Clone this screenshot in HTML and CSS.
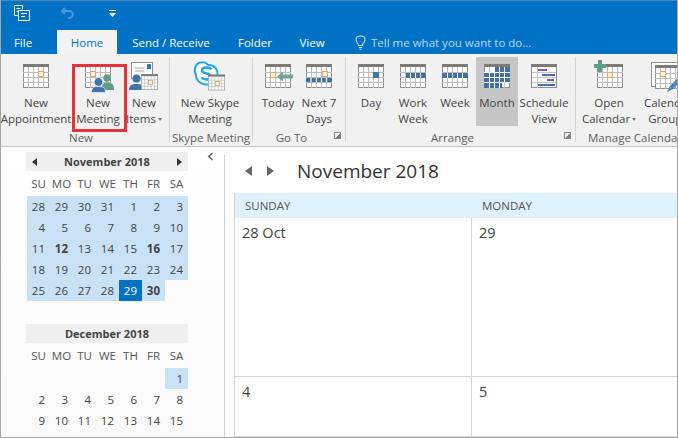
FILE: index.html
```html
<!DOCTYPE html>
<html lang="en">
<head>
<meta charset="utf-8">
<title>Calendar - Outlook</title>
<link rel="stylesheet" href="styles.css">
</head>
<body>
<svg class="defs" width="0" height="0">
  <defs>
    <symbol id="cal" viewBox="0 0 26 24">
      <rect x="0.5" y="0.5" width="25" height="23" fill="#fff" stroke="#8f8f8f"/>
      <rect x="0" y="0" width="26" height="3" fill="#7d7a78"/>
      <path d="M5.500 3V24M10.500 3V24M15.500 3V24M20.500 3V24M0 8.500H26M0 13.500H26M0 18.500H26" stroke="#bcbcbc" fill="none"/>
    </symbol>
    <symbol id="orange" viewBox="0 0 6 6">
      <rect x="0.5" y="0.5" width="5" height="5" fill="#fdf3e6" stroke="#e2a568"/>
    </symbol>
  </defs>
</svg>
<div class="app">
  <header class="titlebar">
    <div class="qat">
      <svg class="qat-outlook" width="18" height="18" viewBox="0 0 18 18" fill="none" stroke="#fff">
        <path d="M1.500 1.500H9.500V5.500M1.500 1.500V11.500H4.500M3.500 4.500H7.500M3.500 7.500H5M5.500 6.500H16.500V16.500H5.500ZM8 9.500H14M8 12.500H12"/>
      </svg>
      <svg class="qat-undo" width="14" height="12" viewBox="0 0 14 12" fill="none" stroke="#4f97d6" stroke-width="2">
        <path d="M5 1L2 4L5 7M2 4H9C14 4 14 11 8 11"/>
      </svg>
      <svg class="qat-more" width="7" height="7" viewBox="0 0 7 7" fill="#fff">
        <rect x="0" y="0" width="7" height="1"/><path d="M0 3H7L3.500 7Z"/>
      </svg>
    </div>
    <nav class="tabs">
      <span class="tab tab-file">File</span>
      <span class="tab tab-home">Home</span>
      <span class="tab tab-send">Send / Receive</span>
      <span class="tab tab-folder">Folder</span>
      <span class="tab tab-view">View</span>
      <span class="tell">
        <svg width="11" height="15" viewBox="0 0 11 15" fill="none" stroke="#c5dff5" stroke-width="1.100">
          <path d="M3.500 10.500C3.500 8 1 7.500 1 4.800C1 2.500 3 1 5.500 1C8 1 10 2.500 10 4.800C10 7.500 7.500 8 7.500 10.500ZM3.800 12.500H7.200M4.500 14.300H6.500"/>
        </svg>
        Tell me what you want to do...
      </span>
    </nav>
  </header>

  <section class="ribbon">
    <div class="group g-new">
      <div class="btns">
        <div class="btn w70">
          <svg class="ico" width="70" height="38" viewBox="0 0 70 38"><use href="#cal" x="22" y="7" width="26" height="24"/><use href="#orange" x="37" y="14" width="6" height="6"/></svg>
          <span>New</span><span>Appointment</span>
        </div>
        <div class="btn w54">
          <svg class="ico" width="54" height="38" viewBox="0 0 54 38">
            <use href="#cal" x="14" y="7" width="26" height="24"/><use href="#orange" x="19" y="14" width="6" height="6"/>
            <circle cx="36" cy="21" r="3.700" fill="#5f9e86"/><path d="M30.500 33C30.500 26.500 33 25.500 36.500 25.500C40 25.500 43 26.500 43 33Z" fill="#5f9e86"/>
            <circle cx="27.500" cy="25" r="4.300" fill="#3f74ad" stroke="#fff" stroke-width="0.600"/><path d="M20.500 35.500C20.500 30.500 23 29.500 27.500 29.500C32 29.500 34.500 30.500 34.500 35.500Z" fill="#3f74ad" stroke="#fff" stroke-width="0.600"/>
          </svg>
          <span>New</span><span>Meeting</span>
        </div>
        <div class="btn w38">
          <svg class="ico" width="38" height="38" viewBox="0 0 38 38">
            <rect x="6.500" y="5.500" width="21" height="16" fill="#fff" stroke="#8f8f8f"/><rect x="22" y="7" width="4" height="5" fill="#3f74ad"/><path d="M10 11H19M10 14H19" stroke="#aaa"/>
            <circle cx="11.500" cy="21.500" r="4" fill="#3f74ad"/><path d="M4 33C4 28 7 27 11.500 27C16 27 19 28 19 33Z" fill="#3f74ad"/>
            <use href="#cal" x="16" y="17" width="17" height="16"/><use href="#orange" x="23" y="23" width="5" height="5"/>
          </svg>
          <span>New</span><span>Items <i class="caret"></i></span>
        </div>
      </div>
      <div class="glabel">New</div>
    </div>

    <div class="group g-skype">
      <div class="btns">
        <div class="btn w80">
          <svg class="ico" width="80" height="38" viewBox="0 0 80 38">
            <path d="M31 5.500C36 4 37 8 39 8C45 8 48 13 47.500 18C50 23 44 29 40 27C34 29 26 25 26 18C23 12 26 6 31 5.500Z" fill="#fff" stroke="#1fa6e0" stroke-width="2"/>
            <path d="M41.500 12.500C39 9.500 32 10 32 13.500C32 17.500 41 15.500 41 19.500C41 23 34 23.500 31.500 20.500" fill="none" stroke="#1fa6e0" stroke-width="2.400"/>
            <use href="#cal" x="38" y="17" width="17" height="17"/><use href="#orange" x="45" y="24" width="5" height="5"/>
          </svg>
          <span>New Skype</span><span>Meeting</span>
        </div>
      </div>
      <div class="glabel">Skype Meeting</div>
    </div>

    <div class="group g-goto">
      <div class="btns">
        <div class="btn w40">
          <svg class="ico" width="40" height="38" viewBox="0 0 40 38">
            <use href="#cal" x="7" y="7" width="26" height="24"/><use href="#orange" x="12" y="15" width="6" height="6"/>
            <path d="M19 19.500L25 14.500V17.500H35V21.500H25V24.500Z" fill="#6fa593"/>
          </svg>
          <span>Today</span>
        </div>
        <div class="btn w42">
          <svg class="ico" width="42" height="38" viewBox="0 0 42 38">
            <use href="#cal" x="8" y="7" width="26" height="24"/><use href="#orange" x="24" y="14" width="6" height="6"/>
            <path d="M8 21H34V25H8Z" fill="#3f6fa8"/><path d="M13 21V25M18.500 21V25M23.500 21V25M28.500 21V25" stroke="#fff" stroke-width="1.200"/>
          </svg>
          <span>Next 7</span><span>Days</span>
        </div>
      </div>
      <div class="glabel">Go To</div>
      <i class="launcher"></i>
    </div>

    <div class="group g-arrange">
      <div class="btns">
        <div class="btn w42">
          <svg class="ico" width="42" height="38" viewBox="0 0 42 38">
            <use href="#cal" x="8" y="7" width="26" height="24"/><rect x="23" y="15" width="6" height="6" fill="#3f74ad"/>
          </svg>
          <span>Day</span>
        </div>
        <div class="btn w42">
          <svg class="ico" width="42" height="38" viewBox="0 0 42 38">
            <use href="#cal" x="8" y="7" width="26" height="24"/>
            <path d="M14 16H34V21H14Z" fill="#44709f"/><path d="M18.500 16V21M23.500 16V21M28.500 16V21" stroke="#fff"/>
          </svg>
          <span>Work</span><span>Week</span>
        </div>
        <div class="btn w42">
          <svg class="ico" width="42" height="38" viewBox="0 0 42 38">
            <use href="#cal" x="8" y="7" width="26" height="24"/>
            <path d="M8 16H34V21H8Z" fill="#44709f"/><path d="M13.500 16V21M18.500 16V21M23.500 16V21M28.500 16V21" stroke="#fff"/>
          </svg>
          <span>Week</span>
        </div>
        <div class="btn w42 active">
          <svg class="ico" width="42" height="38" viewBox="0 0 42 38">
            <use href="#cal" x="8" y="7" width="26" height="24"/>
            <rect x="18" y="10" width="16" height="6" fill="#44709f"/>
            <rect x="8" y="16" width="26" height="10" fill="#44709f"/>
            <rect x="8" y="26" width="18" height="5" fill="#44709f"/>
            <path d="M13.500 16V31M18.500 10V31M23.500 10V31M28.500 10V26M8 15.500H34M8 20.500H34M8 25.500H34" stroke="#fff" fill="none"/>
          </svg>
          <span>Month</span>
        </div>
        <div class="btn w52">
          <svg class="ico" width="52" height="38" viewBox="0 0 52 38">
            <rect x="13.500" y="7.500" width="25" height="23" fill="#fff" stroke="#8f8f8f"/><rect x="13" y="7" width="26" height="3" fill="#7d7a78"/>
            <path d="M19.500 10V31M14 15.500H38M14 20.500H38M14 25.500H38" stroke="#c4c4c4" fill="none"/>
            <path d="M20 13H29" stroke="#8a5a9a" stroke-width="2"/><path d="M24 18H37" stroke="#3f74ad" stroke-width="2"/>
            <path d="M29 23H36" stroke="#8a5a9a" stroke-width="2"/><path d="M20 28H37" stroke="#3f74ad" stroke-width="2"/>
          </svg>
          <span>Schedule</span><span>View</span>
        </div>
      </div>
      <div class="glabel">Arrange</div>
      <i class="launcher"></i>
    </div>

    <div class="group g-manage">
      <div class="btns">
        <div class="btn w62">
          <svg class="ico" width="62" height="38" viewBox="0 0 62 38">
            <use href="#cal" x="19" y="7" width="26" height="24"/><use href="#orange" x="29" y="15" width="6" height="6"/>
            <path d="M20 3H24V7H28V11H24V15H20V11H16V7H20Z" fill="#5f9e8a"/>
          </svg>
          <span>Open</span><span>Calendar <i class="caret"></i></span>
        </div>
        <div class="btn w56">
          <svg class="ico" width="56" height="38" viewBox="0 0 56 38">
            <rect x="11.500" y="5.500" width="28" height="24" fill="#fff" stroke="#8f8f8f"/>
            <use href="#cal" x="15" y="8" width="26" height="24"/><use href="#orange" x="20" y="14" width="6" height="6"/>
            <path d="M27 35L30 29L41 18L44 21L33 32Z" fill="#4a86c0"/>
          </svg>
          <span>Calendar</span><span>Groups</span>
        </div>
      </div>
      <div class="glabel">Manage Calendars</div>
    </div>
    <div class="callout"></div>
  </section>

  <main class="content">
    <aside class="sidebar">
      <div class="mini">
        <div class="mini-head">
          <i class="tri tri-l"></i><b>November 2018</b><i class="tri tri-r"></i>
        </div>
        <div class="mini-grid">
          <span class="wd">SU</span><span class="wd">MO</span><span class="wd">TU</span><span class="wd">WE</span><span class="wd">TH</span><span class="wd">FR</span><span class="wd">SA</span>
          <span class="d s">28</span><span class="d s">29</span><span class="d s">30</span><span class="d s">31</span><span class="d s">1</span><span class="d s">2</span><span class="d s">3</span>
          <span class="d s">4</span><span class="d s">5</span><span class="d s">6</span><span class="d s">7</span><span class="d s">8</span><span class="d s">9</span><span class="d s">10</span>
          <span class="d s">11</span><span class="d s b">12</span><span class="d s">13</span><span class="d s">14</span><span class="d s">15</span><span class="d s b">16</span><span class="d s">17</span>
          <span class="d s">18</span><span class="d s">19</span><span class="d s">20</span><span class="d s">21</span><span class="d s">22</span><span class="d s">23</span><span class="d s">24</span>
          <span class="d s">25</span><span class="d s">26</span><span class="d s">27</span><span class="d s">28</span><span class="d today">29</span><span class="d s b">30</span><span class="d"></span>
        </div>
      </div>
      <div class="mini mini-dec">
        <div class="mini-head mini-head-c"><b>December 2018</b></div>
        <div class="mini-grid">
          <span class="wd">SU</span><span class="wd">MO</span><span class="wd">TU</span><span class="wd">WE</span><span class="wd">TH</span><span class="wd">FR</span><span class="wd">SA</span>
          <span class="d"></span><span class="d"></span><span class="d"></span><span class="d"></span><span class="d"></span><span class="d"></span><span class="d s">1</span>
          <span class="d">2</span><span class="d">3</span><span class="d">4</span><span class="d">5</span><span class="d">6</span><span class="d">7</span><span class="d">8</span>
          <span class="d">9</span><span class="d">10</span><span class="d">11</span><span class="d">12</span><span class="d">13</span><span class="d">14</span><span class="d">15</span>
        </div>
      </div>
      <svg class="collapse" width="7" height="9" viewBox="0 0 7 9" fill="none" stroke="#666" stroke-width="1.600"><path d="M5.500 1L1.800 4.500L5.500 8"/></svg>
    </aside>
    <section class="main">
      <div class="main-head">
        <i class="tri tri-big-l"></i><i class="tri tri-big-r"></i>
        <h1>November 2018</h1>
      </div>
      <div class="month">
        <div class="dow">SUNDAY</div><div class="dow">MONDAY</div>
        <div class="cell">28 Oct</div><div class="cell">29</div>
        <div class="cell">4</div><div class="cell">5</div>
      </div>
    </section>
  </main>
</div>
</body>
</html>
```
FILE: styles.css
```css
* { box-sizing: border-box; }
html, body { margin: 0; height: 100%; overflow: hidden; }
body { font-family: "Open Sans", "Liberation Sans", sans-serif; color: #444; }
.defs { position: absolute; }
.app {
  position: relative;
  width: 678px; height: 438px;
  display: flex; flex-direction: column;
  overflow: hidden;
  border-left: 1px solid #a8a8a8;
  border-right: 1px solid #a8a8a8;
  border-bottom: 1px solid #a8a8a8;
}

/* title bar */
.titlebar { background: #0072c6; height: 54px; flex: none; border-top: 1px solid #4a86b4; }
.qat { height: 29px; display: flex; align-items: flex-start; }
.qat-outlook { margin: 3px 0 0 12px; }
.qat-undo { margin: 6px 0 0 29px; }
.qat-more { margin: 9px 0 0 35px; }
.tabs { height: 24px; display: flex; align-items: stretch; font-size: 11.5px; color: #fff; }
.tab { display: flex; align-items: center; justify-content: center; white-space: nowrap; }
.tab-file { width: 44px; }
.tab-home { width: 60px; margin-left: 12px; background: #f3f3f3; color: #0072c6; }
.tab-send { width: 92px; margin-left: 8px; }
.tab-folder { width: 46px; margin-left: 15px; }
.tab-view { width: 40px; margin-left: 14px; }
.tell { display: flex; align-items: center; gap: 5px; margin-left: 23px; color: #bcd9f2; white-space: nowrap; font-size: 11.5px; }

/* ribbon */
.ribbon {
  position: relative;
  flex: none; height: 93px;
  display: flex;
  background: #f1f1f1;
  border-bottom: 1px solid #c6c6c6;
  padding-top: 3px;
  font-size: 11.5px;
  color: #444;
}
.group {
  position: relative;
  display: flex; flex-direction: column; flex: none;
  border-right: 1px solid #d4d4d4;
  height: 85px;
}
.g-new { width: 169px; }
.g-skype { width: 83px; }
.g-goto { width: 93px; padding-left: 5px; }
.g-arrange { width: 230px; padding-left: 4px; }
.g-manage { width: 110px; padding-left: 2px; border-right: 0; }
.btns { display: flex; height: 69px; }
.btn {
  flex: none;
  display: flex; flex-direction: column; align-items: center;
  line-height: 16px; white-space: nowrap;
}
.btn.active { background: #c6c6c6; }
.ico { display: block; flex: none; }
.w38 { width: 38px; } .w40 { width: 40px; } .w42 { width: 42px; } .w56 { width: 56px; }
.w52 { width: 52px; } .w54 { width: 54px; } .w62 { width: 62px; } .w70 { width: 70px; } .w80 { width: 80px; }
.caret {
  display: inline-block; vertical-align: middle;
  border: 2.500px solid transparent; border-top: 3px solid #777; border-bottom: 0;
  margin-left: -1px;
}
.glabel { margin-top: 4px; line-height: 16px; text-align: center; color: #5f5f5f; font-size: 11.5px; white-space: nowrap; }
.g-new .glabel { padding-right: 8px; }
.g-goto .glabel { padding-right: 20px; }
.g-arrange .glabel { padding-right: 20px; }
.g-manage .glabel { text-align: left; padding-left: 10px; }
.launcher {
  position: absolute; right: 4px; bottom: 3px;
  width: 7px; height: 7px;
  border: 1px solid #8a8a8a;
  background: linear-gradient(135deg, transparent 55%, #777 55%);
}
.callout {
  position: absolute; left: 71px; top: 10px;
  width: 55px; height: 68px;
  border: 3px solid #e2343a;
}

/* content */
.content { flex: 1; min-height: 0; display: flex; background: #fff; }
.sidebar {
  position: relative;
  width: 223px; flex: none;
  padding: 5px 0 0 25px;
  background: linear-gradient(#fff, #f9f9f9);
}
.mini { width: 162px; }
.mini-dec { margin-top: 23px; }
.mini-head {
  height: 19px;
  display: flex; align-items: center; justify-content: space-between;
  background: #efefef; padding: 0 6px;
  font-size: 11px; color: #444;
}
.mini-head-c { justify-content: center; }
.mini-grid { display: grid; grid-template-columns: repeat(7, 23px); grid-template-rows: 25px; grid-auto-rows: 21px; padding-left: 1px; font-size: 11.5px; }
.wd { display: flex; align-items: center; justify-content: center; color: #555; }
.d { display: flex; align-items: center; justify-content: flex-end; padding-right: 5px; color: #444; }
.s { background: #c9e1f5; }
.b { font-weight: 700; }
.today { background: #0072c6; color: #fff; }
.tri { display: block; width: 0; height: 0; border-style: solid; border-color: transparent; }
.tri-l { border-width: 4px 5px 4px 0; border-right-color: #333; }
.tri-r { border-width: 4px 0 4px 5px; border-left-color: #333; }
.collapse { position: absolute; left: 206px; top: 5px; }

.main { flex: 1; min-width: 0; position: relative; padding: 8px 0 0 0; }
.main::before { content: ""; position: absolute; left: 0; top: 8px; bottom: 0; width: 1px; background: #d2d2d2; }
.main-head { height: 38px; display: flex; align-items: center; padding: 0 0 6px 21px; }
.tri-big-l { border-width: 5.500px 7px 5.500px 0; border-right-color: #666; }
.tri-big-r { border-width: 5.500px 0 5.500px 7px; border-left-color: #666; margin-left: 15px; }
h1 { margin: 0 0 0 23px; font-size: 19px; font-weight: 400; color: #333; white-space: nowrap; }
.month {
  margin-left: 10px;
  display: grid; grid-template-columns: 237px 1fr; grid-template-rows: 25px 159px 60px;
  border-left: 1px solid #d6d6d6;
}
.dow { background: #def1fd; font-size: 11.5px; color: #555; display: flex; align-items: center; padding-left: 10px; }
.cell { border-right: 1px solid #d6d6d6; border-bottom: 1px solid #d6d6d6; padding: 4px 0 0 7px; font-size: 14.5px; line-height: 22px; color: #444; }
.cell:nth-child(even) { border-right: 0; }
```
